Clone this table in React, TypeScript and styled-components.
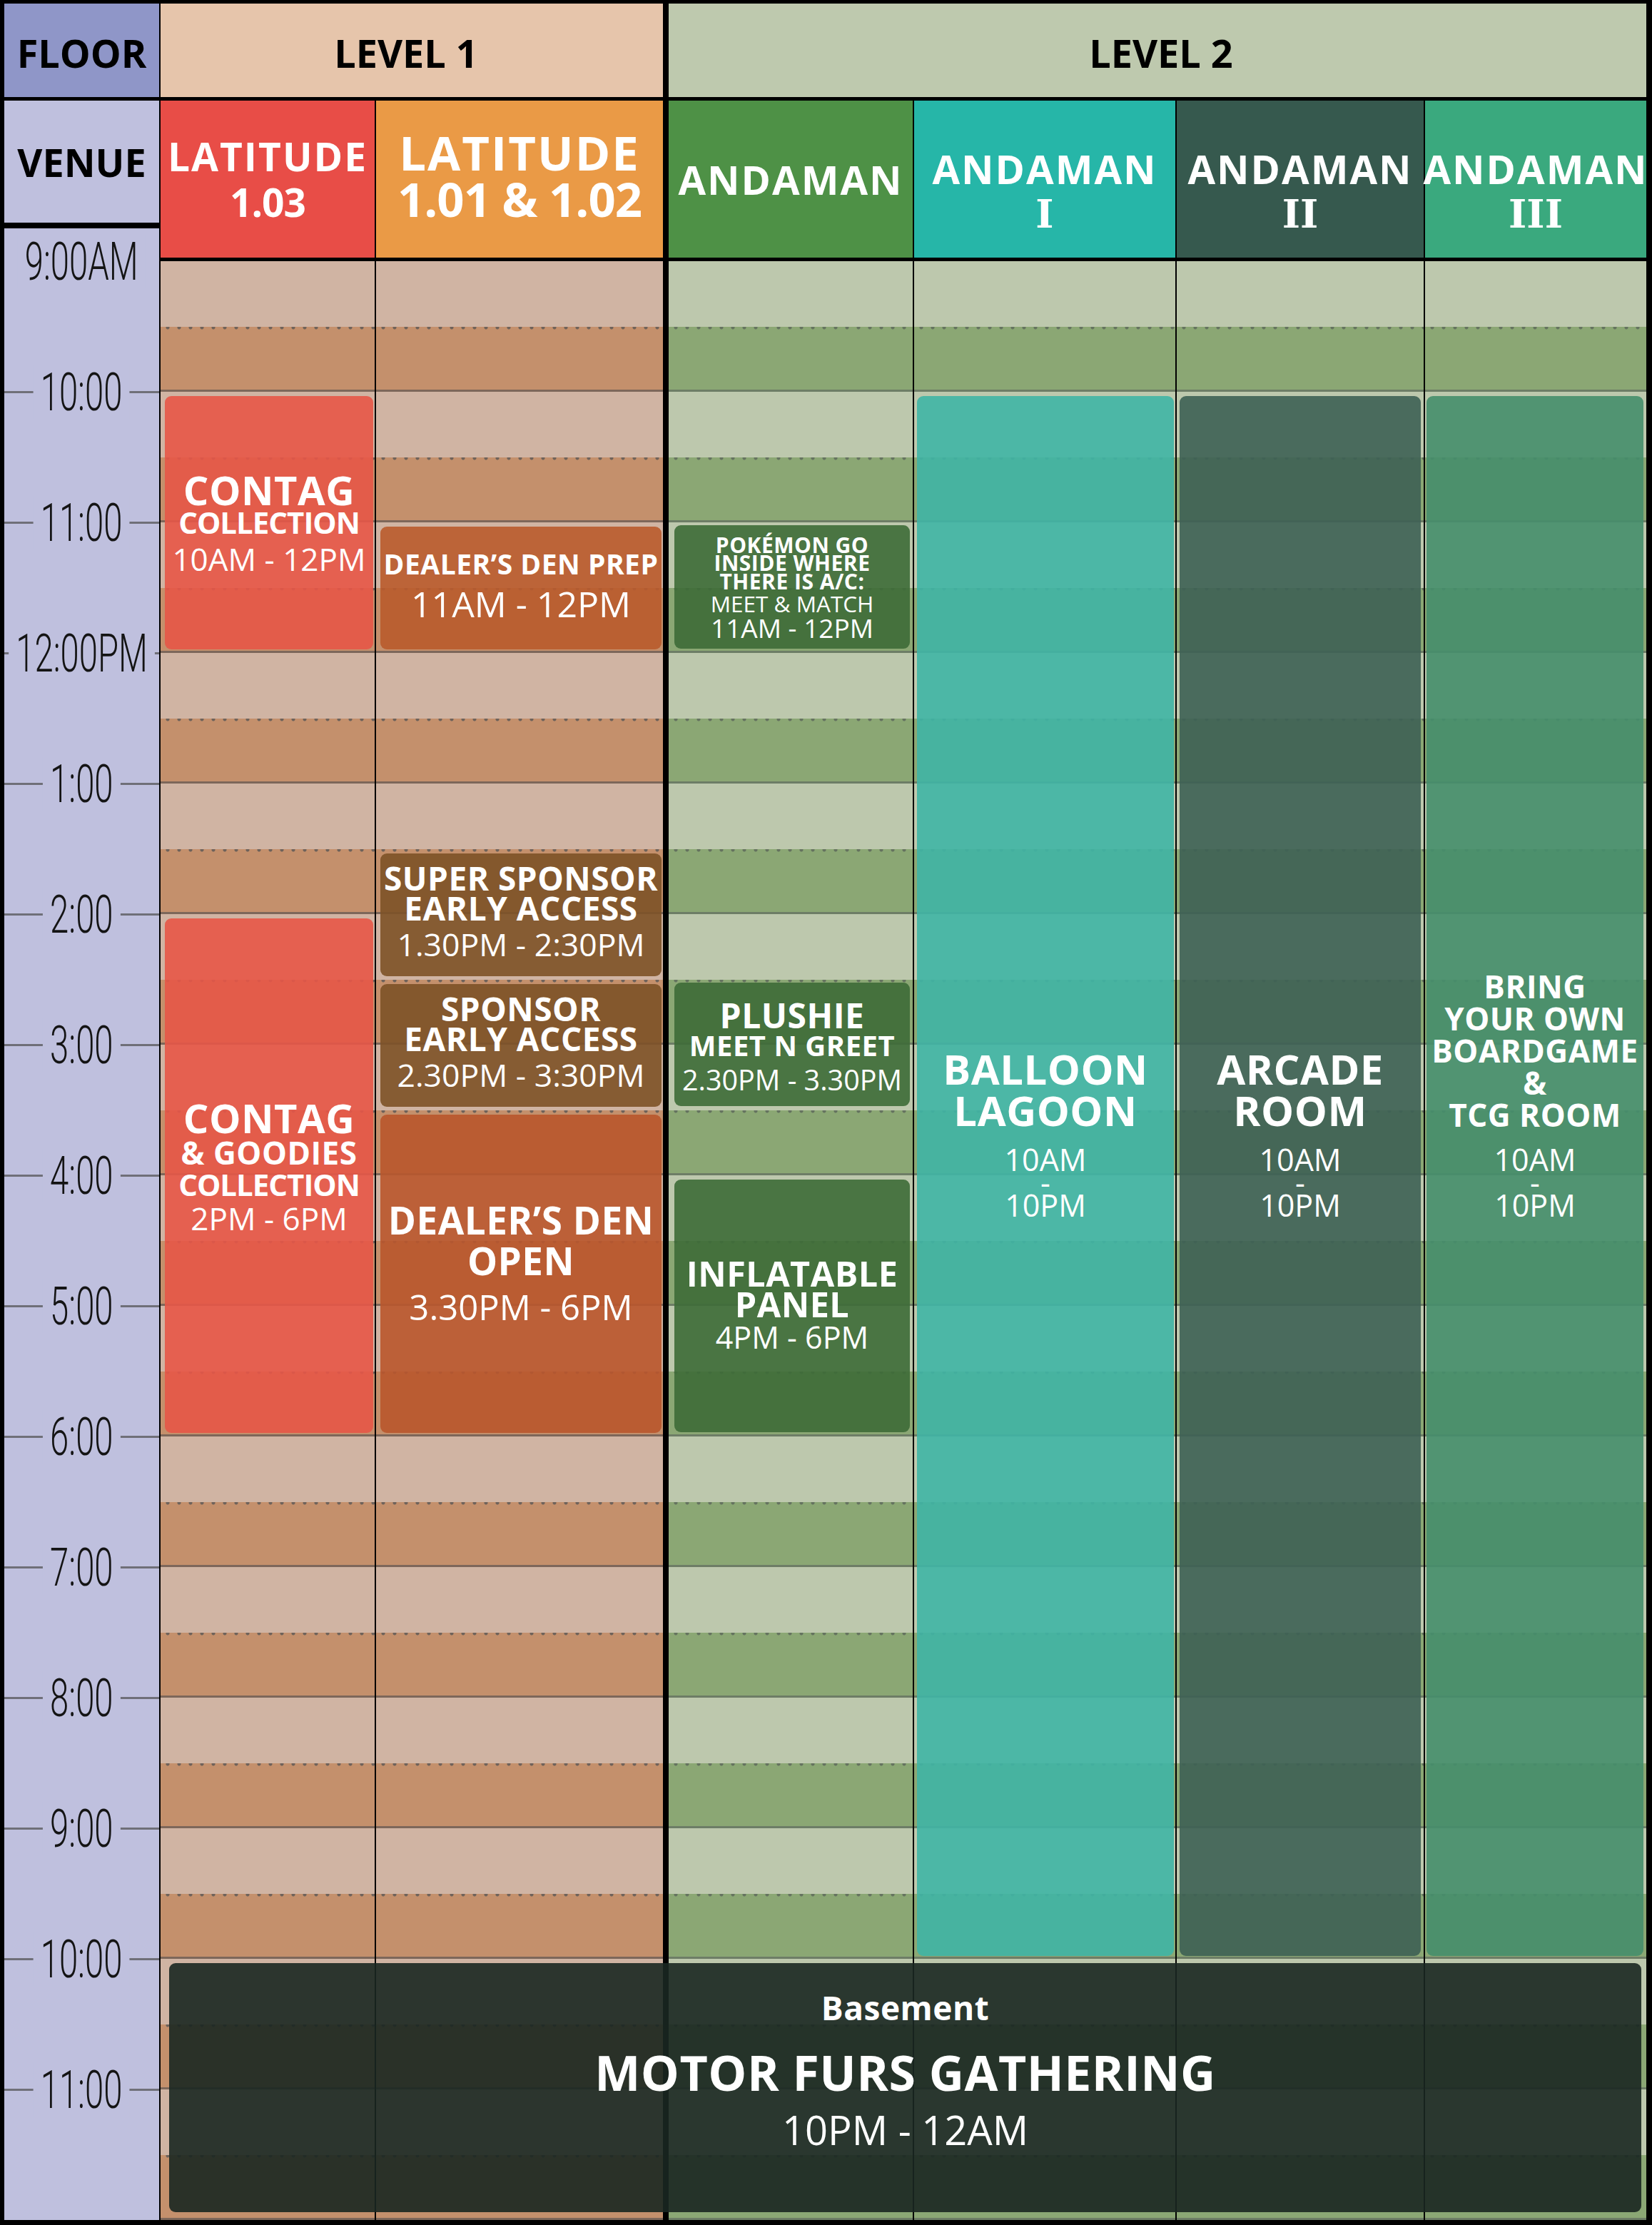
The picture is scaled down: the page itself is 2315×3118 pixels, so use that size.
import styled, { createGlobalStyle, css } from "styled-components";

const HALF = 91.5;

const palette = {
  1: { light: "#d0b4a3", dark: "#c4906c", rule: "#7d675a", dot: "#6f625a" },
  2: { light: "#bdc8ad", dark: "#8ba774", rule: "#6d7d66", dot: "#65735f" },
};

const colours = {
  contag: "rgba(231, 86, 71, 0.9)",
  dealerPrep: "rgba(185, 91, 44, 0.9)",
  dealerOpen: "rgba(185, 87, 44, 0.9)",
  sponsor: "rgba(125, 82, 39, 0.9)",
  andaman: "rgba(61, 107, 55, 0.9)",
  balloon: "rgba(63, 181, 165, 0.9)",
  arcade: "rgba(61, 96, 84, 0.9)",
  board: "rgba(69, 142, 107, 0.9)",
  motor: "rgba(26, 39, 33, 0.9)",
};

// grid line for a given hour (9 = 9:00AM, 22 = 10PM)
const rows = (from: number, to: number) =>
  `${5 + (from - 9) * 2} / ${5 + (to - 9) * 2}`;

const venueCols = [3, 5, 7, 9, 11, 13];
const hours = [
  "9:00AM", "10:00", "11:00", "12:00PM", "1:00", "2:00", "3:00", "4:00",
  "5:00", "6:00", "7:00", "8:00", "9:00", "10:00", "11:00",
];

const App = () => {
  return (
    <>
      <GlobalStyle />
      <Board>
        <HeadCell $col="1" $bg="#8f96c8">FLOOR</HeadCell>
        <HeadCell $col="3 / 6" $bg="#e6c5ab" $nudge={-16}>LEVEL 1</HeadCell>
        <HeadCell $col="7 / 14" $bg="#bec9ae" $nudge={10}>LEVEL 2</HeadCell>

        <TimeColumn>
          <VenueLabel>VENUE</VenueLabel>
          <Axis>
            {hours.map((h, i) => (
              <Tick key={i} $line={i > 0}>
                <TickLabel>{h}</TickLabel>
              </Tick>
            ))}
          </Axis>
        </TimeColumn>

        <Venue $col={3} $bg="#e84d47" $size={55} $lh={64}>
          <span>LATITUDE</span>
          <Plain>1.03</Plain>
        </Venue>
        <Venue $col={5} $bg="#ea9a46" $size={67} $lh={65} $shift={-10}>
          <span>LATITUDE</span>
          <Plain>1.01 &amp; 1.02</Plain>
        </Venue>
        <Venue $col={7} $bg="#4e9146" $size={56} $lh={64}>
          <span>ANDAMAN</span>
        </Venue>
        <Venue $col={9} $bg="#26b6a8" $size={56} $lh={64} $shift={34}>
          <span>ANDAMAN</span>
          <Numeral>I</Numeral>
        </Venue>
        <Venue $col={11} $bg="#36594e" $size={56} $lh={64} $shift={34}>
          <span>ANDAMAN</span>
          <Numeral>II</Numeral>
        </Venue>
        <Venue $col={13} $bg="#3aa97e" $size={56} $lh={64} $shift={34}>
          <span>ANDAMAN</span>
          <Numeral>III</Numeral>
        </Venue>

        {venueCols.map((c) =>
          Array.from({ length: 30 }, (_, k) => (
            <Slot
              key={`${c}-${k}`}
              $lvl={c <= 5 ? 1 : 2}
              $dark={k % 2 === 1}
              style={{ gridColumn: c, gridRow: k + 5 }}
            />
          ))
        )}

        {/* Level 1 */}
        <Event $col="3" $rows={rows(10, 12)} $bg={colours.contag} $shift={11}>
          <Title $size={56} $lh={48}>CONTAG</Title>
          <Title $size={42} $lh={43} $tight>COLLECTION</Title>
          <Hours $size={44} $lh={61}>10AM - 12PM</Hours>
        </Event>
        <Event $col="5" $rows={rows(11, 12)} $bg={colours.dealerPrep}>
          <Title $size={39} $lh={44}>DEALER’S DEN PREP</Title>
          <Hours $size={50} $lh={68}>11AM - 12PM</Hours>
        </Event>
        <Event $col="5" $rows={rows(13.5, 14.5)} $bg={colours.sponsor}>
          <Title $size={46} $lh={41.5}>SUPER SPONSOR</Title>
          <Title $size={46} $lh={41.5}>EARLY ACCESS</Title>
          <Hours $size={44.5} $lh={59.5}>1.30PM - 2:30PM</Hours>
        </Event>
        <Event $col="5" $rows={rows(14.5, 15.5)} $bg={colours.sponsor}>
          <Title $size={46} $lh={41.5}>SPONSOR</Title>
          <Title $size={46} $lh={41.5}>EARLY ACCESS</Title>
          <Hours $size={44.5} $lh={59.5}>2.30PM - 3:30PM</Hours>
        </Event>
        <Event $col="5" $rows={rows(15.5, 18)} $bg={colours.dealerOpen} $shift={-22}>
          <Title $size={53} $lh={57.5}>DEALER’S DEN</Title>
          <Title $size={53} $lh={57.5}>OPEN</Title>
          <Hours $size={49} $lh={71.5}>3.30PM - 6PM</Hours>
        </Event>
        <Event $col="3" $rows={rows(14, 18)} $bg={colours.contag} $shift={-22}>
          <Title $size={56} $lh={52}>CONTAG</Title>
          <Title $size={44} $lh={46}>&amp; GOODIES</Title>
          <Title $size={42} $lh={43} $tight>COLLECTION</Title>
          <Hours $size={44} $lh={52}>2PM - 6PM</Hours>
        </Event>

        {/* Level 2 */}
        <Event $col="7" $rows={rows(11, 12)} $bg={colours.andaman} $inset="4px 4px 6px 8px">
          <Title $size={30} $lh={25.5}>POKÉMON GO</Title>
          <Title $size={30} $lh={25.5}>INSIDE WHERE</Title>
          <Title $size={30} $lh={25.5}>THERE IS A/C:</Title>
          <Hours $size={31.5} $lh={38.5}>MEET &amp; MATCH</Hours>
          <Hours $size={37} $lh={28.5}>11AM - 12PM</Hours>
        </Event>
        <Event $col="7" $rows={rows(14.5, 15.5)} $bg={colours.andaman} $inset="4px 4px 6px 8px" $shift={17}>
          <Title $size={48} $lh={42}>PLUSHIE</Title>
          <Title $size={40} $lh={41}>MEET N GREET</Title>
          <Hours $size={39.5} $lh={57}>2.30PM - 3.30PM</Hours>
        </Event>
        <Event $col="7" $rows={rows(16, 18)} $bg={colours.andaman} $inset="6px 4px 6px 8px">
          <Title $size={48.5} $lh={43}>INFLATABLE</Title>
          <Title $size={48.5} $lh={43}>PANEL</Title>
          <Hours $size={43} $lh={49}>4PM - 6PM</Hours>
        </Event>

        <Event $col="9" $rows={rows(10, 22)} $bg={colours.balloon} $inset="6px 2px 4px 4px">
          <Upper>
            <Title $size={58} $lh={58}>BALLOON</Title>
            <Title $size={58} $lh={58}>LAGOON</Title>
          </Upper>
          <Lower>
            <Hours $size={43} $lh={32}>10AM</Hours>
            <Hours $size={43} $lh={32}>-</Hours>
            <Hours $size={43} $lh={32}>10PM</Hours>
          </Lower>
        </Event>
        <Event $col="11" $rows={rows(10, 22)} $bg={colours.arcade} $inset="6px 4px 4px 4px">
          <Upper>
            <Title $size={58} $lh={58}>ARCADE</Title>
            <Title $size={58} $lh={58}>ROOM</Title>
          </Upper>
          <Lower>
            <Hours $size={43} $lh={32}>10AM</Hours>
            <Hours $size={43} $lh={32}>-</Hours>
            <Hours $size={43} $lh={32}>10PM</Hours>
          </Lower>
        </Event>
        <Event $col="13" $rows={rows(10, 22)} $bg={colours.board} $inset="6px 4px 4px 2px">
          <Upper>
            <Title $size={44} $lh={45}>BRING</Title>
            <Title $size={44} $lh={45}>YOUR OWN</Title>
            <Title $size={44} $lh={45}>BOARDGAME</Title>
            <Title $size={44} $lh={45}>&amp;</Title>
            <Title $size={44} $lh={45}>TCG ROOM</Title>
          </Upper>
          <Lower>
            <Hours $size={43} $lh={32}>10AM</Hours>
            <Hours $size={43} $lh={32}>-</Hours>
            <Hours $size={43} $lh={32}>10PM</Hours>
          </Lower>
        </Event>

        <Event $col="3 / -1" $rows={rows(22, 24)} $bg={colours.motor} $inset="6px 7px 11px 12px" $shift={-45} $top>
          <Title $size={46} $lh={60}>Basement</Title>
          <Title $size={68} $lh={80} style={{ marginTop: 21 }}>MOTOR FURS GATHERING</Title>
          <Hours $size={56} $lh={80}>10PM - 12AM</Hours>
        </Event>
      </Board>
    </>
  );
};

const GlobalStyle = createGlobalStyle`
  html, body {
    margin: 0;
    padding: 0;
    background: #000;
  }
  #root {
    width: 2315px;
  }
`;

const Board = styled.main`
  width: 2315px;
  height: 3118px;
  box-sizing: border-box;
  border-style: solid;
  border-color: #000;
  border-width: 5px 8px 7px 6px;
  background: #000;
  display: grid;
  grid-template-columns: 217px 2px 300px 2px 402px 8px 342px 2px 366px 2px 346px 2px 310px;
  grid-template-rows: 131px 5px 220px 5px repeat(30, ${HALF}px);
  font-family: "Open Sans", "Liberation Sans", sans-serif;
  color: #fff;
`;

const HeadCell = styled.div<{ $col: string; $bg: string; $nudge?: number }>`
  grid-row: 1;
  grid-column: ${(p) => p.$col};
  background: ${(p) => p.$bg};
  display: flex;
  align-items: center;
  justify-content: center;
  padding-top: 6px;
  padding-left: ${(p) => Math.max(0, p.$nudge ?? 0)}px;
  padding-right: ${(p) => Math.max(0, -(p.$nudge ?? 0))}px;
  font-size: 54px;
  font-weight: 700;
  line-height: 1;
  color: #000;
`;

const TimeColumn = styled.aside`
  grid-column: 1;
  grid-row: 3 / -1;
  display: flex;
  flex-direction: column;
  min-height: 0;
  overflow: hidden;
  background: #bfc0de;
`;

const VenueLabel = styled.div`
  flex: 0 0 179px;
  box-sizing: border-box;
  border-bottom: 8px solid #000;
  display: flex;
  align-items: center;
  justify-content: center;
  font-size: 54px;
  font-weight: 700;
  color: #000;
`;

const Axis = styled.div`
  flex: 1;
  min-height: 0;
  overflow: hidden;
  display: flex;
  flex-direction: column;
  > :first-child {
    margin-top: -45.5px;
  }
`;

const Tick = styled.div<{ $line: boolean }>`
  flex: 0 0 183px;
  position: relative;
  display: flex;
  align-items: center;
  justify-content: center;
  &::before {
    content: "";
    display: ${(p) => (p.$line ? "block" : "none")};
    position: absolute;
    left: 0;
    right: 0;
    top: 90px;
    height: 3px;
    background: #6f6f78;
  }
`;

const TickLabel = styled.span`
  position: relative;
  padding: 0 16px;
  background: #bfc0de;
  font-family: Roboto, "Liberation Sans", sans-serif;
  font-size: 75px;
  font-weight: 300;
  line-height: 1;
  color: #141414;
  white-space: nowrap;
  transform: scaleX(0.63);
`;

const Venue = styled.div<{ $col: number; $bg: string; $size: number; $lh: number; $shift?: number }>`
  grid-row: 3;
  grid-column: ${(p) => p.$col};
  background: ${(p) => p.$bg};
  display: flex;
  flex-direction: column;
  align-items: center;
  justify-content: center;
  padding-top: ${(p) => Math.max(0, p.$shift ?? 0)}px;
  padding-bottom: ${(p) => Math.max(0, -(p.$shift ?? 0))}px;
  font-size: ${(p) => p.$size}px;
  line-height: ${(p) => p.$lh}px;
  font-weight: 700;
  letter-spacing: 2px;
  text-align: center;
  white-space: nowrap;
  color: #fff;
`;

const Plain = styled.span`
  letter-spacing: -1px;
`;

const Numeral = styled.span`
  font-family: "DejaVu Serif", "Liberation Serif", serif;
  font-size: 54px;
  font-weight: 700;
  letter-spacing: 0;
`;

const Slot = styled.div<{ $lvl: 1 | 2; $dark: boolean }>`
  background-color: ${(p) => palette[p.$lvl][p.$dark ? "dark" : "light"]};
  ${(p) =>
    p.$dark &&
    css`
      box-sizing: border-box;
      border-bottom: 3px solid ${palette[p.$lvl].rule};
      background-image: radial-gradient(circle, ${palette[p.$lvl].dot} 2px, transparent 3px);
      background-size: 16px 6px;
      background-repeat: repeat-x;
      background-position: 2px -2px;
    `}
`;

const Event = styled.div<{ $col: string; $rows: string; $bg: string; $inset?: string; $shift?: number; $top?: boolean }>`
  grid-column: ${(p) => p.$col};
  grid-row: ${(p) => p.$rows};
  z-index: ${(p) => (p.$top ? 2 : 1)};
  margin: ${(p) => p.$inset ?? "6px 2px 5px 6px"};
  min-height: 0;
  border-radius: 9px;
  background: ${(p) => p.$bg};
  display: flex;
  flex-direction: column;
  align-items: center;
  justify-content: center;
  padding-top: ${(p) => Math.max(0, p.$shift ?? 0)}px;
  padding-bottom: ${(p) => Math.max(0, -(p.$shift ?? 0))}px;
  box-sizing: border-box;
  overflow: hidden;
  text-align: center;
  color: #fff;
`;

const Title = styled.div<{ $size: number; $lh: number; $tight?: boolean }>`
  font-size: ${(p) => p.$size}px;
  line-height: ${(p) => p.$lh}px;
  font-weight: 700;
  letter-spacing: ${(p) => (p.$tight ? "-1px" : "0.5px")};
  white-space: nowrap;
`;

const Hours = styled.div<{ $size: number; $lh: number }>`
  font-size: ${(p) => p.$size}px;
  line-height: ${(p) => p.$lh}px;
  font-weight: 400;
  white-space: nowrap;
`;

const Upper = styled.div`
  flex: 0.91 1 0;
  min-height: 0;
  display: flex;
  flex-direction: column;
  justify-content: flex-end;
  align-items: center;
`;

const Lower = styled.div`
  flex: 1 1 0;
  min-height: 0;
  display: flex;
  flex-direction: column;
  justify-content: flex-start;
  align-items: center;
  padding-top: 24px;
`;

export default App;
